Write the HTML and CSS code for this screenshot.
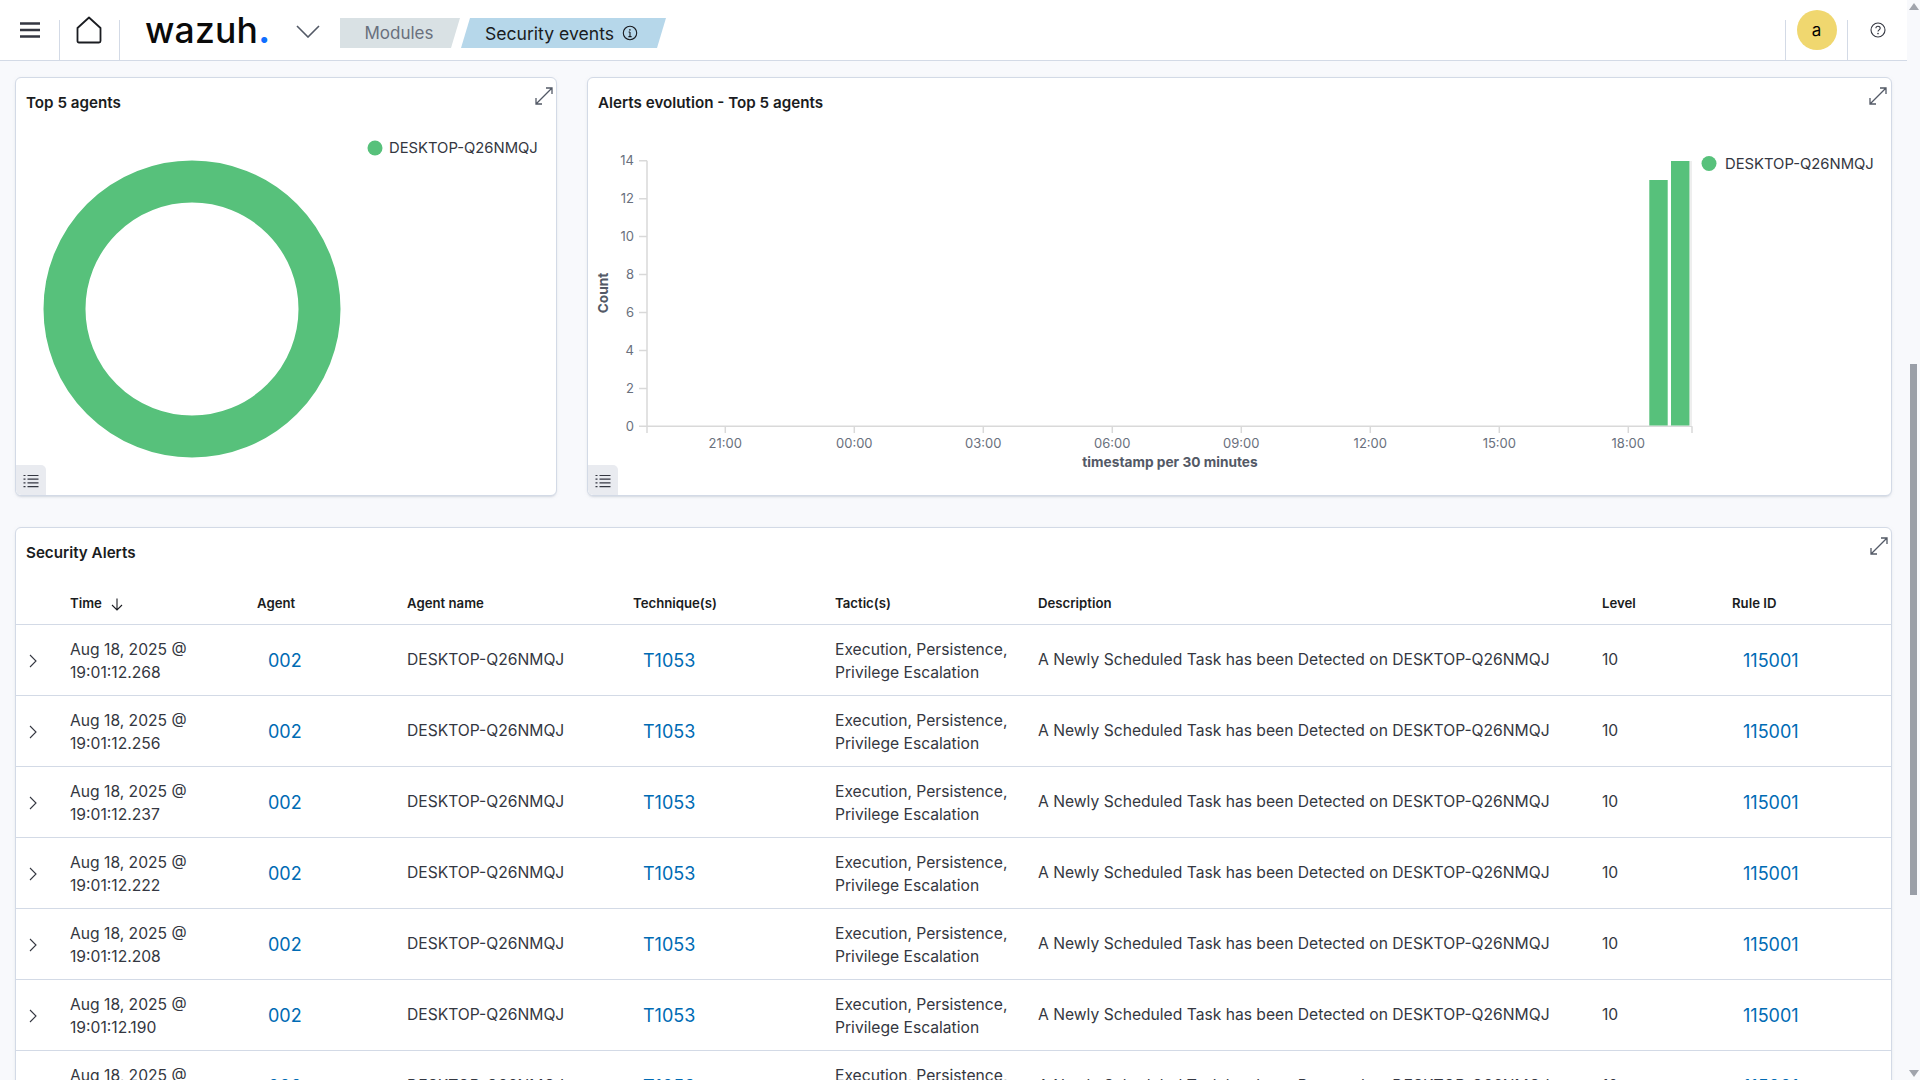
FILE: index.html
```html
<!DOCTYPE html>
<html lang="en">
<head>
    <meta charset="UTF-8">
    <meta name="viewport" content="width=device-width, initial-scale=1.0">
    <title>Security events</title>
    <link rel="stylesheet" href="styles.css">
</head>
<body>
<div class="page">
    <div class="main">
        <header class="navbar">
            <div class="nav-cell nav-menu">
                <svg width="20" height="16" viewBox="0 0 20 16"><path d="M0 1.5h20M0 8h20M0 14.5h20" stroke="#343741" stroke-width="2.6"/></svg>
            </div>
            <div class="nav-cell nav-home">
                <svg width="26" height="28" viewBox="0 0 26 28"><path d="M13 1.5 L24.5 12 V25 Q24.5 26.5 23 26.5 H3 Q1.5 26.5 1.5 25 V12 Z" fill="none" stroke="#1a1c21" stroke-width="1.8" stroke-linejoin="round"/></svg>
            </div>
            <div class="logo">wazuh<span class="logo-dot">.</span></div>
            <svg class="logo-caret" width="24" height="13" viewBox="0 0 24 13"><path d="M1 1 L12 12 L23 1" fill="none" stroke="#535966" stroke-width="1.6"/></svg>
            <nav class="crumbs">
                <span class="crumb crumb-parent">Modules</span>
                <span class="crumb crumb-current">Security events
                    <svg width="16" height="16" viewBox="0 0 16 16"><circle cx="8" cy="8" r="6.7" fill="none" stroke="#1a1c21" stroke-width="1.1"/><path d="M8 7v4.6M6.4 11.6h3.2M6.6 7h1.4" fill="none" stroke="#1a1c21" stroke-width="1.1"/><circle cx="7.9" cy="4.9" r=".8" fill="#1a1c21"/></svg>
                </span>
            </nav>
            <div class="nav-right">
                <div class="nav-cell nav-user"><span class="avatar">a</span></div>
                <div class="nav-cell nav-help">
                    <svg width="16" height="16" viewBox="0 0 16 16"><circle cx="8" cy="8" r="7" fill="none" stroke="#343741" stroke-width="1.1"/><path d="M5.9 6.2 C5.9 3.6 10.2 3.6 10.2 6.2 C10.2 7.9 8 7.8 8 9.6" fill="none" stroke="#343741" stroke-width="1.1"/><circle cx="8" cy="11.6" r=".8" fill="#343741"/></svg>
                </div>
            </div>
        </header>

        <div class="content">
            <div class="viz-row">
                <section class="card viz-card">
                    <h3 class="card-title">Top 5 agents</h3>
                    <svg class="expand" width="18" height="18" viewBox="0 0 18 18"><path d="M11 1h6v6M17 1 1 17M1 11v6h6" fill="none" stroke="#535966" stroke-width="1.3"/></svg>
                    <svg class="chart" viewBox="-1 -1 540 417">
                        <circle cx="175" cy="230" r="127.5" fill="none" stroke="#57c17b" stroke-width="42"/>
                        <circle cx="358" cy="69" r="7.5" fill="#57c17b"/>
                        <text class="legend-text" x="372" y="74">DESKTOP-Q26NMQJ</text>
                    </svg>
                    <button class="legend-toggle">
                        <svg width="16" height="14" viewBox="0 0 16 14"><path d="M4.5 1.5h11M4.5 5.2h11M4.5 8.9h11M4.5 12.6h11" stroke="#343741" stroke-width="1.2"/><path d="M.5 1.5h2M.5 5.2h2M.5 8.9h2M.5 12.6h2" stroke="#343741" stroke-width="1.2"/></svg>
                    </button>
                </section>

                <section class="card viz-card">
                    <h3 class="card-title">Alerts evolution - Top 5 agents</h3>
                    <svg class="expand" width="18" height="18" viewBox="0 0 18 18"><path d="M11 1h6v6M17 1 1 17M1 11v6h6" fill="none" stroke="#535966" stroke-width="1.3"/></svg>
                    <svg class="chart" viewBox="-1 -1 1303 417">
                        <g class="axis-lines">
                            <path d="M58 81.7V354M58 347.3H1103M1103 347.3V354"/>
                            <path d="M50 81.7h8M50 119.7h8M50 157.6h8M50 195.6h8M50 233.5h8M50 271.4h8M50 309.4h8M50 347.3h8"/>
                            <path d="M136.3 347V354M265.3 347V354M394.3 347V354M523.3 347V354M652.3 347V354M781.3 347V354M910.3 347V354M1039.3 347V354"/>
                        </g>
                        <g class="tick-text" text-anchor="end">
                            <text x="45" y="86">14</text>
                            <text x="45" y="124">12</text>
                            <text x="45" y="162">10</text>
                            <text x="45" y="200">8</text>
                            <text x="45" y="238">6</text>
                            <text x="45" y="276">4</text>
                            <text x="45" y="314">2</text>
                            <text x="45" y="352">0</text>
                        </g>
                        <g class="tick-text" text-anchor="middle">
                            <text x="136.3" y="369">21:00</text>
                            <text x="265.3" y="369">00:00</text>
                            <text x="394.3" y="369">03:00</text>
                            <text x="523.3" y="369">06:00</text>
                            <text x="652.3" y="369">09:00</text>
                            <text x="781.3" y="369">12:00</text>
                            <text x="910.3" y="369">15:00</text>
                            <text x="1039.3" y="369">18:00</text>
                        </g>
                        <text class="axis-title" text-anchor="middle" transform="translate(19 214) rotate(-90)">Count</text>
                        <text class="axis-title" text-anchor="middle" x="581" y="388">timestamp per 30 minutes</text>
                        <rect x="1100" y="82" width="3" height="265" fill="#eeeeee"/>
                        <rect x="1060.3" y="101" width="18.4" height="245.5" fill="#57c17b"/>
                        <rect x="1082" y="82" width="18.4" height="264.5" fill="#57c17b"/>
                        <circle cx="1120" cy="84.5" r="7.5" fill="#57c17b"/>
                        <text class="legend-text" x="1136" y="90">DESKTOP-Q26NMQJ</text>
                    </svg>
                    <button class="legend-toggle">
                        <svg width="16" height="14" viewBox="0 0 16 14"><path d="M4.5 1.5h11M4.5 5.2h11M4.5 8.9h11M4.5 12.6h11" stroke="#343741" stroke-width="1.2"/><path d="M.5 1.5h2M.5 5.2h2M.5 8.9h2M.5 12.6h2" stroke="#343741" stroke-width="1.2"/></svg>
                    </button>
                </section>
            </div>

            <section class="card alerts-card">
                <h3 class="card-title">Security Alerts</h3>
                <svg class="expand" width="18" height="18" viewBox="0 0 18 18"><path d="M11 1h6v6M17 1 1 17M1 11v6h6" fill="none" stroke="#535966" stroke-width="1.3"/></svg>
                <table class="alerts">
                    <colgroup>
                        <col class="col-toggle"><col class="col-time"><col class="col-agent"><col class="col-name"><col class="col-tech"><col class="col-tactic"><col class="col-desc"><col class="col-level"><col class="col-rule">
                    </colgroup>
                    <thead>
                        <tr>
                            <th></th>
                            <th>Time <svg class="sort-arrow" width="14" height="14" viewBox="0 0 14 14"><path d="M7 1.5V13M2 8l5 5 5-5" fill="none" stroke="#1a1c21" stroke-width="1.1"/></svg></th>
                            <th>Agent</th>
                            <th>Agent name</th>
                            <th>Technique(s)</th>
                            <th>Tactic(s)</th>
                            <th>Description</th>
                            <th>Level</th>
                            <th>Rule ID</th>
                        </tr>
                    </thead>
                    <tbody>
                        <tr>
                            <td><svg width="8" height="14" viewBox="0 0 8 14"><path d="M1 1l6 6-6 6" fill="none" stroke="#343741" stroke-width="1.1"/></svg></td>
                            <td>Aug 18, 2025 @<br>19:01:12.268</td>
                            <td><a class="cell-link">002</a></td>
                            <td class="cell-up">DESKTOP-Q26NMQJ</td>
                            <td><a class="cell-link tech-link">T1053</a></td>
                            <td>Execution, Persistence,<br>Privilege Escalation</td>
                            <td class="cell-up">A Newly Scheduled Task has been Detected on DESKTOP-Q26NMQJ</td>
                            <td class="cell-up">10</td>
                            <td><a class="cell-link">115001</a></td>
                        </tr>
                        <tr>
                            <td><svg width="8" height="14" viewBox="0 0 8 14"><path d="M1 1l6 6-6 6" fill="none" stroke="#343741" stroke-width="1.1"/></svg></td>
                            <td>Aug 18, 2025 @<br>19:01:12.256</td>
                            <td><a class="cell-link">002</a></td>
                            <td class="cell-up">DESKTOP-Q26NMQJ</td>
                            <td><a class="cell-link tech-link">T1053</a></td>
                            <td>Execution, Persistence,<br>Privilege Escalation</td>
                            <td class="cell-up">A Newly Scheduled Task has been Detected on DESKTOP-Q26NMQJ</td>
                            <td class="cell-up">10</td>
                            <td><a class="cell-link">115001</a></td>
                        </tr>
                        <tr>
                            <td><svg width="8" height="14" viewBox="0 0 8 14"><path d="M1 1l6 6-6 6" fill="none" stroke="#343741" stroke-width="1.1"/></svg></td>
                            <td>Aug 18, 2025 @<br>19:01:12.237</td>
                            <td><a class="cell-link">002</a></td>
                            <td class="cell-up">DESKTOP-Q26NMQJ</td>
                            <td><a class="cell-link tech-link">T1053</a></td>
                            <td>Execution, Persistence,<br>Privilege Escalation</td>
                            <td class="cell-up">A Newly Scheduled Task has been Detected on DESKTOP-Q26NMQJ</td>
                            <td class="cell-up">10</td>
                            <td><a class="cell-link">115001</a></td>
                        </tr>
                        <tr>
                            <td><svg width="8" height="14" viewBox="0 0 8 14"><path d="M1 1l6 6-6 6" fill="none" stroke="#343741" stroke-width="1.1"/></svg></td>
                            <td>Aug 18, 2025 @<br>19:01:12.222</td>
                            <td><a class="cell-link">002</a></td>
                            <td class="cell-up">DESKTOP-Q26NMQJ</td>
                            <td><a class="cell-link tech-link">T1053</a></td>
                            <td>Execution, Persistence,<br>Privilege Escalation</td>
                            <td class="cell-up">A Newly Scheduled Task has been Detected on DESKTOP-Q26NMQJ</td>
                            <td class="cell-up">10</td>
                            <td><a class="cell-link">115001</a></td>
                        </tr>
                        <tr>
                            <td><svg width="8" height="14" viewBox="0 0 8 14"><path d="M1 1l6 6-6 6" fill="none" stroke="#343741" stroke-width="1.1"/></svg></td>
                            <td>Aug 18, 2025 @<br>19:01:12.208</td>
                            <td><a class="cell-link">002</a></td>
                            <td class="cell-up">DESKTOP-Q26NMQJ</td>
                            <td><a class="cell-link tech-link">T1053</a></td>
                            <td>Execution, Persistence,<br>Privilege Escalation</td>
                            <td class="cell-up">A Newly Scheduled Task has been Detected on DESKTOP-Q26NMQJ</td>
                            <td class="cell-up">10</td>
                            <td><a class="cell-link">115001</a></td>
                        </tr>
                        <tr>
                            <td><svg width="8" height="14" viewBox="0 0 8 14"><path d="M1 1l6 6-6 6" fill="none" stroke="#343741" stroke-width="1.1"/></svg></td>
                            <td>Aug 18, 2025 @<br>19:01:12.190</td>
                            <td><a class="cell-link">002</a></td>
                            <td class="cell-up">DESKTOP-Q26NMQJ</td>
                            <td><a class="cell-link tech-link">T1053</a></td>
                            <td>Execution, Persistence,<br>Privilege Escalation</td>
                            <td class="cell-up">A Newly Scheduled Task has been Detected on DESKTOP-Q26NMQJ</td>
                            <td class="cell-up">10</td>
                            <td><a class="cell-link">115001</a></td>
                        </tr>
                        <tr>
                            <td><svg width="8" height="14" viewBox="0 0 8 14"><path d="M1 1l6 6-6 6" fill="none" stroke="#343741" stroke-width="1.1"/></svg></td>
                            <td>Aug 18, 2025 @<br>19:01:12.175</td>
                            <td><a class="cell-link">002</a></td>
                            <td class="cell-up">DESKTOP-Q26NMQJ</td>
                            <td><a class="cell-link tech-link">T1053</a></td>
                            <td>Execution, Persistence,<br>Privilege Escalation</td>
                            <td class="cell-up">A Newly Scheduled Task has been Detected on DESKTOP-Q26NMQJ</td>
                            <td class="cell-up">10</td>
                            <td><a class="cell-link">115001</a></td>
                        </tr>
                    </tbody>
                </table>
            </section>
        </div>
    </div>

    <div class="scrollbar">
        <span class="scroll-up"></span>
        <span class="scroll-thumb"></span>
        <span class="scroll-down"></span>
    </div>
</div>
</body>
</html>
```

FILE: styles.css
```css
* {
    box-sizing: border-box;
}
html, body {
    height: 100%;
    margin: 0;
}
body {
    background-color: #f8f9fc;
    color: #343741;
    font-family: "Inter", "Liberation Sans", sans-serif;
    font-size: 14px;
    overflow: hidden;
}
.page {
    display: flex;
    height: 100vh;
    overflow: hidden;
}
.main {
    flex: 1;
    min-width: 0;
}

/* Top bar */
.navbar {
    display: flex;
    align-items: stretch;
    height: 61px;
    background-color: #fff;
    border-bottom: 1px solid #d3dae6;
}
.nav-cell {
    display: flex;
    align-items: center;
    justify-content: center;
    margin-top: 20px;
    height: 40px;
}
.nav-cell svg {
    margin-top: -20px;
}
.nav-menu {
    width: 60px;
    border-right: 1px solid #d3dae6;
}
.nav-home {
    width: 60px;
    padding-right: 2px;
    border-right: 1px solid #d3dae6;
}
.logo {
    margin-left: 25px;
    padding-top: 10px;
    width: 151px;
    color: #0a0a0a;
    font-size: 35.5px;
    font-weight: 500;
    line-height: 42px;
    letter-spacing: 0.2px;
}
.logo-dot {
    color: #0f6fff;
    font-weight: 700;
}
.logo-caret {
    align-self: flex-start;
    margin-top: 25px;
}
.crumbs {
    display: flex;
    align-items: flex-start;
    margin-left: 20px;
    padding-top: 18px;
}
.crumb {
    display: flex;
    align-items: center;
    justify-content: center;
    height: 30px;
    font-size: 17px;
}
.crumb-parent {
    width: 120px;
    padding-right: 2px;
    background-color: #d9e1e4;
    color: #69707d;
    clip-path: polygon(0 0, 100% 0, calc(100% - 9px) 100%, 0 100%);
}
.crumb-current {
    gap: 8px;
    width: 205px;
    margin-left: 1px;
    padding-right: 4px;
    background-color: #b6d7ea;
    color: #1a1c21;
    font-size: 17.6px;
    clip-path: polygon(9px 0, 100% 0, calc(100% - 9px) 100%, 0 100%);
}
.nav-right {
    display: flex;
    margin-left: auto;
}
.nav-user {
    width: 62px;
    border-left: 1px solid #d3dae6;
}
.avatar {
    display: flex;
    align-items: center;
    justify-content: center;
    width: 40px;
    height: 40px;
    margin-top: -20px;
    border-radius: 50%;
    background-color: #f0d76f;
    color: #000;
    font-size: 17px;
}
.nav-help {
    width: 60px;
    border-left: 1px solid #d3dae6;
}

/* Cards */
.content {
    padding: 16px 15px 0;
}
.card {
    position: relative;
    background-color: #fff;
    border: 1px solid #d3dae6;
    border-radius: 6px;
    box-shadow: 0 2px 2px -1px rgba(152, 162, 179, 0.3), 0 1px 5px -2px rgba(152, 162, 179, 0.3);
}
.card-title {
    margin: 0;
    padding: 14px 10px 0;
    color: #1a1c21;
    font-size: 15.2px;
    font-weight: 600;
    line-height: 21px;
}
.expand {
    position: absolute;
    top: 9px;
    right: 3px;
}
.viz-row {
    display: grid;
    grid-template-columns: 542px 1fr;
    gap: 30px;
    margin-bottom: 31px;
}
.viz-card {
    height: 419px;
    overflow: hidden;
}
.viz-card .expand {
    z-index: 1;
}
.viz-card + .viz-card .expand {
    right: 4px;
}
.chart {
    position: absolute;
    top: 0;
    left: 0;
    width: 100%;
    height: 100%;
}
.legend-toggle {
    position: absolute;
    left: 0;
    bottom: 0;
    display: flex;
    align-items: center;
    justify-content: center;
    width: 30px;
    height: 30px;
    padding: 1px 0 0;
    background-color: #e9ebf0;
    border: none;
    border-radius: 0 5px 0 5px;
}
.legend-text {
    fill: #343741;
    font-size: 14.8px;
}
.axis-lines path {
    fill: none;
    stroke: #d9d9d9;
    stroke-width: 1.5;
}
.tick-text {
    fill: #69707d;
    font-size: 13px;
}
.axis-title {
    fill: #535966;
    font-size: 13.7px;
    font-weight: 700;
}

/* Alerts table */
.alerts {
    width: 100%;
    margin-top: 18px;
    border-collapse: collapse;
    table-layout: fixed;
}
.col-toggle { width: 46px; }
.col-time { width: 187px; }
.col-agent { width: 150px; }
.col-name { width: 226px; }
.col-tech { width: 202px; }
.col-tactic { width: 203px; }
.col-desc { width: 564px; }
.col-level { width: 130px; }
.col-rule { width: 167px; }
.alerts th {
    height: 43px;
    padding: 2px 8px 0;
    border-bottom: 1px solid #d3dae6;
    color: #1a1c21;
    font-size: 13.2px;
    font-weight: 600;
    text-align: left;
}
.sort-arrow {
    margin-left: 5px;
    vertical-align: -3px;
}
.alerts td {
    height: 71px;
    padding: 4px 8px 0;
    border-bottom: 1px solid #d3dae6;
    font-size: 15.65px;
    line-height: 22.5px;
    white-space: nowrap;
}
.alerts td:first-child {
    padding: 2px 0 0 13px;
}
.alerts td svg {
    display: block;
}
.cell-up {
    padding-bottom: 3px !important;
}
.cell-link {
    margin-left: 11px;
    color: #006bb4;
    font-size: 18px;
}
.tech-link {
    margin-left: 10px;
}

/* Browser scrollbar */
.scrollbar {
    position: relative;
    flex: 0 0 13px;
    background-color: #f8f9fc;
}
.scroll-up, .scroll-down {
    position: absolute;
    left: 2px;
    width: 0;
    height: 0;
    border-left: 5px solid transparent;
    border-right: 5px solid transparent;
}
.scroll-up {
    top: 3px;
    border-bottom: 7px solid #a0a4ac;
}
.scroll-down {
    bottom: 3px;
    border-top: 7px solid #a0a4ac;
}
.scroll-thumb {
    position: absolute;
    top: 364px;
    left: 3px;
    width: 7px;
    height: 531px;
    background-color: #9a9fa8;
}
```
